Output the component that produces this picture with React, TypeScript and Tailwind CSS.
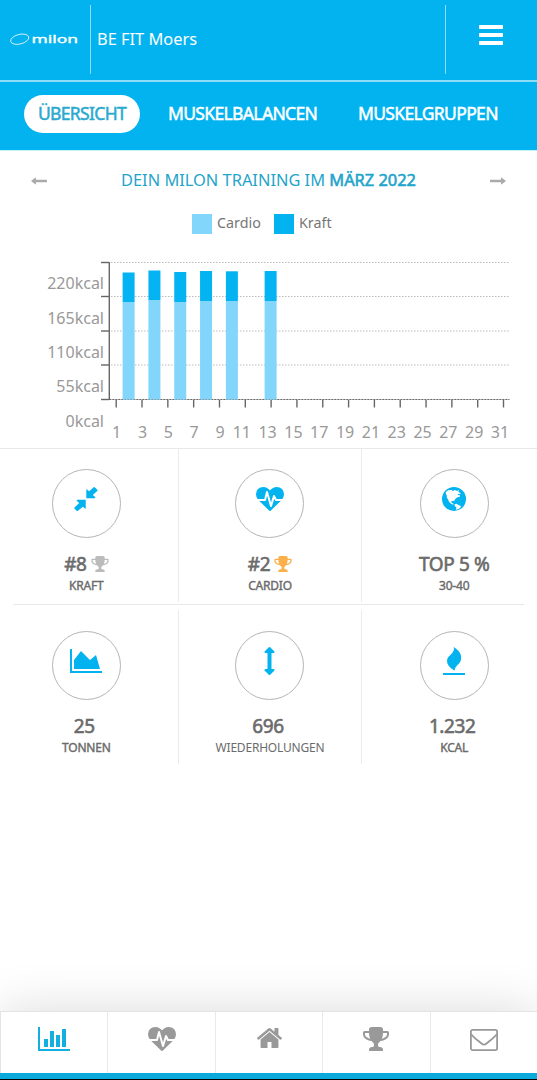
import type { ReactNode } from 'react';
import clsx from 'clsx';

interface IconProps {
    className?: string;
}

interface StatProps {
    icon: ReactNode;
    value: string;
    label: string;
    trophy?: string;
    shifted?: boolean;
    light?: boolean;
}

const trainings = [
    { day: 2, top: 272.5, split: 302 },
    { day: 4, top: 270.5, split: 300 },
    { day: 6, top: 272, split: 302 },
    { day: 8, top: 271, split: 301 },
    { day: 10, top: 271.3, split: 301 },
    { day: 13, top: 271, split: 301 },
];

const gridLines = [262.5, 296.5, 331, 365, 399.5];
const kcalLabels = ['220kcal', '165kcal', '110kcal', '55kcal', '0kcal'];
const oddDays = Array.from({ length: 16 }, (_, i) => i * 2 + 1);
const dayX = (day: number) => 116.2 + (day - 1) * 12.91;

function MenuIcon({ className }: IconProps) {
    return (
        <svg className={className} viewBox="0 0 24 20" fill="currentColor">
            <rect width="24" height="4" rx="0.8" />
            <rect y="8" width="24" height="4" rx="0.8" />
            <rect y="16" width="24" height="4" rx="0.8" />
        </svg>
    );
}

function ArrowIcon({ className }: IconProps) {
    return (
        <svg className={className} viewBox="0 0 16 8" fill="currentColor">
            <path d="M0 4 4.3.7Q5 .3 5 1.2V2.8H15.5Q16 2.8 16 3.3V4.7Q16 5.2 15.5 5.2H5V6.8Q5 7.7 4.3 7.3Z" />
        </svg>
    );
}

function CompressIcon({ className }: IconProps) {
    return (
        <svg className={className} viewBox="0 0 24 24" fill="currentColor">
            <path d="M12.3 2.8Q12.3 1.8 13 2.5L15.2 4.3 19.4.4Q20.2-.3 21 .5L23.3 2.7Q24 3.3 23.2 4L18.8 7.9 21 10.1Q22 11.2 20.8 11.2H12.3Z" />
            <path d="M11.7 21.2Q11.7 22.2 11 21.5L8.8 19.7 4 23.8Q3.3 24.4 2.6 23.7L.6 21.7Q0 21 .7 20.3L5.2 16.1 3 13.9Q2 12.7 3.2 12.7H11.7Z" />
        </svg>
    );
}

function HeartbeatIcon({ className }: IconProps) {
    return (
        <svg className={className} viewBox="0 0 1792 1536" fill="currentColor">
            <path d="M1280 896h305q-5 6-10 10.5t-9 7.5l-3 4-623 600q-18 18-44 18t-44-18l-624-602q-5-2-21-20h369q22 0 39.5-13.5t22.5-34.5l70-281 190 667q6 20 23 33t39 13q21 0 38-13t23-33l146-485 56 112q18 35 57 35zm512-428q0 145-103 300h-369l-111-221q-8-17-25.5-27t-36.5-8q-45 5-56 46l-129 430-196-686q-6-20-23.5-33t-39.5-13-39 13.5-22 34.5l-116 464h-423q-103-155-103-300 0-220 127-344t351-124q62 0 126.5 21.5t120 58 95.5 68.5 76 68q36-36 76-68t95.5-68.5 120-58 126.5-21.5q224 0 351 124t127 344z" />
        </svg>
    );
}

function GlobeIcon({ className }: IconProps) {
    return (
        <svg className={className} viewBox="0 0 72 72">
            <circle cx="36" cy="36" r="36" fill="currentColor" />
            <path
                fill="#fff"
                d="M11 16 18 10 29 9 33 13 37 9 46 12 51 8 49 15 57 19 51 22 48 20 47 25 53 24 54 29 48 30 42 34 38 38 37 43 33 41 28 43 29 48 35 50 34 53 27 50 21 44 18 37 15 33 14 25 12 21Z"
            />
            <path fill="#fff" d="M38 52 44 50 49 54 57 57 55 62 50 66 42 68 43 61 38 57Z" />
        </svg>
    );
}

function AreaChartIcon({ className }: IconProps) {
    return (
        <svg className={className} viewBox="0 128 2048 1536" fill="currentColor">
            <path d="M2048 1536v128h-2048v-1536h128v1408h1920zm-384-1024l256 896h-1664v-576l448-576 576 576z" />
        </svg>
    );
}

function ArrowsVerticalIcon({ className }: IconProps) {
    return (
        <svg className={className} viewBox="576 0 640 1792" fill="currentColor">
            <path d="M1216 320q0 26-19 45t-45 19h-128v1024h128q26 0 45 19t19 45-19 45l-256 256q-19 19-45 19t-45-19l-256-256q-19-19-19-45t19-45 45-19h128v-1024h-128q-26 0-45-19t-19-45 19-45l256-256q19-19 45-19t45 19l256 256q19 19 19 45z" />
        </svg>
    );
}

function FireIcon({ className }: IconProps) {
    return (
        <svg className={className} viewBox="0 0 22 28" fill="currentColor">
            <path d="M10.8 0C15.5 3 19 6.8 18 12.5 17.2 17.5 11.6 18.6 11.9 23.5 7.3 21.3 3.6 17.6 4.1 13.2 4.7 7.7 12.2 7 10.8 0Z" />
            <rect y="26" width="22" height="2" />
        </svg>
    );
}

function TrophyIcon({ className }: IconProps) {
    return (
        <svg className={className} viewBox="64 128 1664 1536" fill="currentColor">
            <path d="M522 883q-74-162-74-371h-256v96q0 78 94.5 162t235.5 113zm1078-275v-96h-256q0 209-74 371 141-29 235.5-113t94.5-162zm128-128v128q0 71-41.5 143t-112 130-173 97.5-215.5 44.5q-42 54-95 95-38 34-52.5 72.5t-14.5 89.5q0 54 30.5 91t97.5 37q75 0 133.5 45.5t58.5 114.5v64q0 14-9 23t-23 9h-832q-14 0-23-9t-9-23v-64q0-69 58.5-114.5t133.5-45.5q67 0 97.5-37t30.5-91q0-51-14.5-89.5t-52.5-72.5q-53-41-95-95-113-5-215.5-44.5t-173-97.5-112-130-41.5-143v-128q0-40 28-68t68-28h288v-96q0-66 47-113t113-47h576q66 0 113 47t47 113v96h288q40 0 68 28t28 68z" />
        </svg>
    );
}

function BarChartIcon({ className }: IconProps) {
    return (
        <svg className={className} viewBox="0 128 2048 1536" fill="currentColor">
            <path d="M640 896v512h-256v-512h256zm384-512v1024h-256v-1024h256zm1024 1152v128h-2048v-1536h128v1408h1920zm-640-896v768h-256v-768h256zm384-384v1152h-256v-1152h256z" />
        </svg>
    );
}

function HomeIcon({ className }: IconProps) {
    return (
        <svg className={className} viewBox="89 253 1614 1283" fill="currentColor">
            <path d="M1472 992v480q0 26-19 45t-45 19h-384v-384h-256v384h-384q-26 0-45-19t-19-45v-480q0-1 .5-3t.5-3l575-474 575 474q1 2 1 6zm223-69l-62 74q-8 9-21 11h-3q-13 0-21-7l-692-577-692 577q-12 8-24 7-13-2-21-11l-62-74q-8-10-7-23.5t11-21.5l719-599q32-26 76-26t76 26l244 204v-195q0-14 9-23t23-9h192q14 0 23 9t9 23v408l219 182q10 8 11 21.5t-7 23.5z" />
        </svg>
    );
}

function MailIcon({ className }: IconProps) {
    return (
        <svg className={className} viewBox="0 0 28 22" fill="none" stroke="currentColor" strokeWidth="1.8">
            <rect x="0.9" y="0.9" width="26.2" height="20.2" rx="1.8" />
            <path d="M1 5C4 9 8 11.5 11.5 14.5Q14 16.8 16.5 14.5C20 11.5 24 9 27 5" />
        </svg>
    );
}

// Italic ring followed by the wide wordmark
function Logo() {
    return (
        <svg className="ml-2.5 h-4 w-[69px] shrink-0" viewBox="0 0 69 16">
            <ellipse cx="9.7" cy="8.2" rx="9.3" ry="4.8" transform="rotate(-14 9.7 8.2)" fill="none" stroke="#fff" strokeWidth="0.9" opacity="0.85" />
            <text
                x="21.5"
                y="11.5"
                textLength="46.5"
                lengthAdjust="spacingAndGlyphs"
                fill="#fff"
                stroke="#fff"
                strokeWidth="0.35"
                className="font-['Noto_Sans'] text-[11px]"
            >
                milon
            </text>
        </svg>
    );
}

function TrainingChart() {
    return (
        <svg className="block h-[208px] w-full" viewBox="0 240 537 208">
            <g stroke="#666" strokeWidth="1.4">
                <path d="M109.3 262V400" />
                {gridLines.map((y) => (
                    <path key={y} d={`M101 ${y}H109`} />
                ))}
                <path d="M109 399.5H509.5" strokeWidth="1" />
                {oddDays.map((day) => (
                    <path key={day} d={`M${dayX(day)} 400V407.5`} />
                ))}
            </g>
            <g stroke="#bbb" strokeWidth="1" strokeDasharray="1.5 1.5">
                {gridLines.map((y) => (
                    <path key={y} d={`M111 ${y}H510`} />
                ))}
            </g>
            {trainings.map(({ day, top, split }) => (
                <g key={day}>
                    <rect x={dayX(day) - 6.5} y={top} width="12" height={split - top} fill="#03b3f2" />
                    <rect x={dayX(day) - 6.5} y={split} width="12" height={399.5 - split} fill="#82d5fb" />
                </g>
            ))}
            <g fill="#999" className="font-['Noto_Sans'] text-[16px]">
                {kcalLabels.map((label, i) => (
                    <text key={label} x="104" y={289.3 + i * 34.3} textAnchor="end">
                        {label}
                    </text>
                ))}
                {oddDays.map((day) => (
                    <text key={day} x={dayX(day) + (day > 9 ? -3.5 : 0.5)} y="437.5" textAnchor="middle">
                        {day}
                    </text>
                ))}
            </g>
        </svg>
    );
}

function Stat({ icon, value, label, trophy, shifted, light }: StatProps) {
    return (
        <div className="flex flex-col items-center">
            <div className="flex h-[69px] w-[69px] justify-center rounded-full border border-[#b5b5b5] text-[#03b3ef]">
                <div className="flex h-[58px] items-center">{icon}</div>
            </div>
            <div
                className={clsx(
                    'mt-3 flex h-7 items-center gap-1 text-[19px] tracking-[-0.4px] text-[#6b6b6b] [-webkit-text-stroke:0.6px]',
                    shifted && 'pr-1',
                )}
            >
                <span>{value}</span>
                {trophy && <TrophyIcon className={clsx('h-4 w-[18px]', trophy)} />}
            </div>
            <div
                className={clsx(
                    'h-4 text-[12px] leading-4 tracking-[-0.2px] text-[#6b6b6b]',
                    !light && '[-webkit-text-stroke:0.4px]',
                )}
            >
                {label}
            </div>
        </div>
    );
}

export default function App() {
    return (
        <div className="flex h-[1080px] w-[537px] flex-col overflow-hidden bg-white font-['Noto_Sans',sans-serif]">
            <header className="h-[150px] shrink-0 bg-[#03b3ef] text-white">
                <div className="flex h-[82px] items-center border-b-2 border-[#8ddcf8] pb-0.5">
                    <Logo />
                    <div className="ml-[11px] flex h-[69px] w-[356px] items-center border-x border-[#8ddcf8] pt-px pl-1.5 text-[16.4px]">
                        BE FIT Moers
                    </div>
                    <button className="ml-[33px] pb-2" aria-label="Menü">
                        <MenuIcon className="h-5 w-6" />
                    </button>
                </div>
                <nav className="flex h-[63px] items-center pl-6 text-[17.5px] tracking-[-0.65px] [-webkit-text-stroke:0.5px]">
                    <button className="h-[38px] w-[116px] rounded-full bg-white text-[#2aa9cf]">ÜBERSICHT</button>
                    <button className="ml-7 w-[148px] whitespace-nowrap">MUSKELBALANCEN</button>
                    <button className="ml-[42px] w-[139px] whitespace-nowrap">MUSKELGRUPPEN</button>
                </nav>
            </header>

            <div className="flex h-[60px] shrink-0 items-center justify-between border-t border-[#c4f5fc] px-[31px] text-[#aaa]">
                <ArrowIcon className="h-2 w-4" />
                <h1 className="text-[16.4px] whitespace-nowrap text-[#1fa5cb]">
                    DEIN MILON TRAINING IM <span className="[-webkit-text-stroke:0.6px]">MÄRZ 2022</span>
                </h1>
                <ArrowIcon className="h-2 w-4 rotate-180" />
            </div>

            <div className="flex h-[30px] shrink-0 items-start pt-1 pl-48 text-[14.3px] leading-[18px] text-[#777]">
                <span className="h-5 w-5 bg-[#82d5fb]" />
                <span className="ml-[5px] w-[57px]">Cardio</span>
                <span className="h-5 w-5 bg-[#03b3ef]" />
                <span className="ml-[5px]">Kraft</span>
            </div>

            <TrainingChart />

            <section className="h-[156px] shrink-0 border-t border-[#e8e8e8]">
                <div className="-ml-[5px] grid h-[153px] w-[551px] grid-cols-3 divide-x divide-[#ebebeb] *:pt-5">
                    <Stat icon={<CompressIcon className="h-6 w-6" />} value="#8" label="KRAFT" trophy="text-[#bbb]" />
                    <Stat icon={<HeartbeatIcon className="h-6 w-7" />} value="#2" label="CARDIO" trophy="text-[#fbb04c]" />
                    <Stat icon={<GlobeIcon className="h-6 w-6" />} value="TOP 5 %" label="30-40" />
                </div>
            </section>
            <section className="shrink-0">
                <div className="mx-[13px] h-px bg-[#e8e8e8]" />
                <div className="mt-[5px] -ml-[5px] grid h-[154px] w-[551px] grid-cols-3 divide-x divide-[#ebebeb] *:pt-[21px]">
                    <Stat icon={<AreaChartIcon className="h-6 w-8" />} value="25" label="TONNEN" shifted />
                    <Stat icon={<ArrowsVerticalIcon className="h-7 w-[11px]" />} value="696" label="WIEDERHOLUNGEN" shifted light />
                    <Stat icon={<FireIcon className="h-7 w-[22px]" />} value="1.232" label="KCAL" shifted />
                </div>
            </section>

            <footer className="mt-auto border-b border-black bg-[#0ba9dc] pb-1.5 shadow-[0_0_50px_rgba(0,0,0,0.15)]">
                <nav className="flex h-[62px] divide-x divide-[#e9e9e9] border-t border-l border-[#e4e4e4] bg-white text-[#999] *:flex *:flex-1 *:justify-center *:pt-[15px]">
                    <button className="text-[#12afe0]"><BarChartIcon className="h-6 w-8" /></button>
                    <button><HeartbeatIcon className="h-6 w-7" /></button>
                    <button><HomeIcon className="mt-px h-5 w-[25px]" /></button>
                    <button><TrophyIcon className="h-6 w-[26px]" /></button>
                    <button><MailIcon className="mt-0.5 h-[22px] w-7" /></button>
                </nav>
            </footer>
        </div>
    );
}
